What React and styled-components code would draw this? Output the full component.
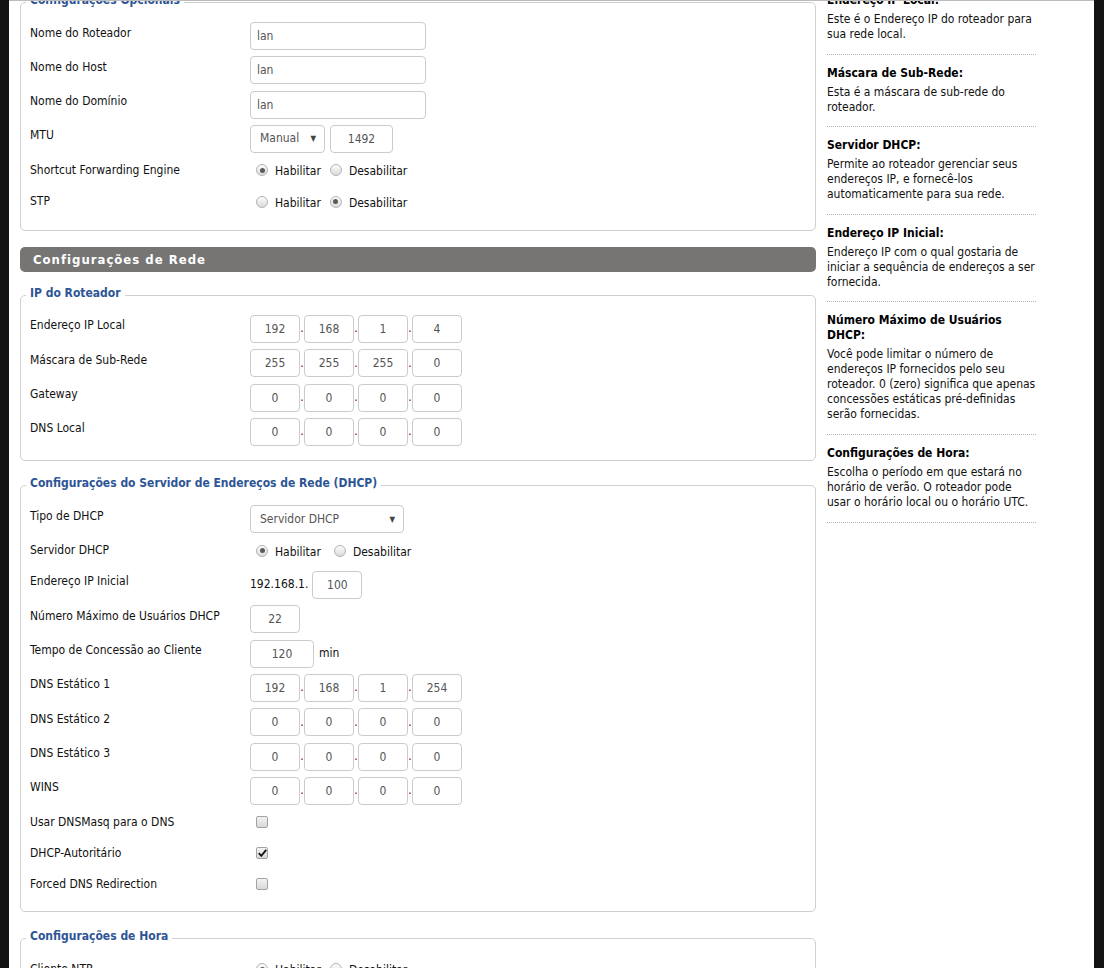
import React from 'react'
import styled, { createGlobalStyle } from 'styled-components'

const GlobalStyle = createGlobalStyle`
  html, body {
    margin: 0;
    padding: 0;
    background: #131313;
  }
  body {
    font-family: 'DejaVu Sans Condensed', 'Liberation Sans', sans-serif;
    font-size: 12px;
    color: #111;
  }
  * {
    box-sizing: border-box;
  }
`

const Page = styled.div`
  margin-left: 9px;
  width: 1085px;
  height: 968px;
  background: #fff;
  border-top: 1px solid #bcbcbc;
  overflow: hidden;
`

const Columns = styled.div`
  display: flex;
  align-items: flex-start;
  gap: 11px;
  padding-left: 11px;
  margin-top: -5px;
`

const Main = styled.div`
  width: 796px;
  flex: none;
  margin-top: -3px;
`

const Sidebar = styled.aside`
  width: 210px;
  flex: none;
  margin-top: -3px;
`

const Fieldset = styled.fieldset`
  margin: ${(p) => p.$mt || 0}px 0 0;
  padding: 7px 10px ${(p) => p.$pb || 10}px 5px;
  border: 1px solid #cfcfcf;
  border-radius: 5px;
  min-width: 0;
`

const Legend = styled.legend`
  padding: 0 4px 4px;
  font-weight: bold;
  color: #2d5596;
  line-height: 15px;
`

const SectionBar = styled.h2`
  margin: 16px 0 0;
  height: 25px;
  padding-left: 13px;
  background: #767574;
  border-radius: 5px;
  color: #fff;
  font-size: 13px;
  font-weight: bold;
  letter-spacing: 1px;
  line-height: 25px;
`

const Row = styled.div`
  display: grid;
  grid-template-columns: 220px 1fr;
  align-items: start;
  padding: 3px 0 3.33px 4px;
`

const Label = styled.div`
  padding-top: 3.5px;
  line-height: 15px;
  color: #111;
`

const Field = styled.div`
  display: flex;
  align-items: center;
  min-height: ${(p) => (p.$short ? 25 : 28)}px;
  line-height: 15px;
`

const TextInput = styled.input`
  width: ${(p) => p.$w}px;
  height: 28px;
  margin: 0;
  padding: 0 ${(p) => (p.$center ? 0 : 6)}px;
  border: 1px solid #cbcbcb;
  border-radius: 4px;
  background: #fff;
  font: inherit;
  color: #555;
  text-align: ${(p) => (p.$center ? 'center' : 'left')};
  outline: none;
`

const SelectBox = styled.div`
  width: ${(p) => p.$w}px;
  height: 28px;
  margin-right: ${(p) => p.$mr || 0}px;
  padding: 0 8px 0 9px;
  display: flex;
  align-items: center;
  justify-content: space-between;
  border: 1px solid #cbcbcb;
  border-radius: 4px;
  color: #555;
`

const Caret = styled.span`
  font-size: 8px;
  color: #444;
`

const Dot = styled.span`
  width: 4px;
  text-align: center;
  color: #7a0000;
`

const Plain = styled.span`
  margin: ${(p) => p.$m || '0'};
  color: #111;
`

const Choice = styled.label`
  display: inline-flex;
  align-items: center;
  margin-right: ${(p) => p.$mr || 0}px;
  color: #111;
`

const RadioDot = styled.span`
  position: relative;
  width: 12px;
  height: 12px;
  margin: 0 7px 3px 6px;
  border: 1px solid #b3b3b3;
  border-radius: 50%;
  background: linear-gradient(#fdfdfd, #dadada);

  &::after {
    content: '';
    display: ${(p) => (p.$checked ? 'block' : 'none')};
    position: absolute;
    left: 2.5px;
    top: 2.5px;
    width: 5px;
    height: 5px;
    border-radius: 50%;
    background: #5a5a5a;
  }
`

const CheckBox = styled.span`
  width: 12px;
  height: 12px;
  margin: 0 0 4px 6px;
  display: flex;
  align-items: center;
  justify-content: center;
  border: 1px solid #a3a3a3;
  border-radius: 2px;
  background: linear-gradient(#f2f2f2, #d9d9d9);
`

const HelpItem = styled.div`
  width: 209px;
  padding: 11px 0 11.6px;
  border-bottom: 1px dotted #b5b5b5;

  &:first-child {
    padding-top: 0;
  }
`

const HelpTitle = styled.div`
  margin-bottom: 4px;
  font-weight: bold;
  line-height: 15px;
  color: #000;
`

const HelpText = styled.div`
  line-height: 15px;
  color: #111;
`

const Ip = ({ values }) => (
  <Field>
    {values.map((v, i) => (
      <React.Fragment key={i}>
        {i > 0 && <Dot>.</Dot>}
        <TextInput $w={50} $center readOnly value={v} />
      </React.Fragment>
    ))}
  </Field>
)

const Radios = ({ on, gap = 3 }) => (
  <Field $short>
    <Choice $mr={gap}>
      <RadioDot $checked={on} />
      Habilitar
    </Choice>
    <Choice>
      <RadioDot $checked={!on} />
      Desabilitar
    </Choice>
  </Field>
)

const Check = ({ checked }) => (
  <Field $short>
    <CheckBox>
      {checked && (
        <svg width='9' height='8' viewBox='0 0 9 8'>
          <path d='M0.8 4.2 L3.3 6.8 L8.2 0.9' fill='none' stroke='#111' strokeWidth='1.8' />
        </svg>
      )}
    </CheckBox>
  </Field>
)

const help = [
  {
    title: 'Endereço IP Local:',
    text: 'Este é o Endereço IP do roteador para sua rede local.',
  },
  { title: 'Máscara de Sub-Rede:', text: 'Esta é a máscara de sub-rede do roteador.' },
  {
    title: 'Servidor DHCP:',
    text: 'Permite ao roteador gerenciar seus endereços IP, e fornecê-los automaticamente para sua rede.',
  },
  {
    title: 'Endereço IP Inicial:',
    text: 'Endereço IP com o qual gostaria de iniciar a sequência de endereços a ser fornecida.',
  },
  {
    title: 'Número Máximo de Usuários DHCP:',
    text: 'Você pode limitar o número de endereços IP fornecidos pelo seu roteador. 0 (zero) significa que apenas concessões estáticas pré-definidas serão fornecidas.',
  },
  {
    title: 'Configurações de Hora:',
    text: 'Escolha o período em que estará no horário de verão. O roteador pode usar o horário local ou o horário UTC.',
  },
]

const routerIp = [
  ['Endereço IP Local', ['192', '168', '1', '4']],
  ['Máscara de Sub-Rede', ['255', '255', '255', '0']],
  ['Gateway', ['0', '0', '0', '0']],
  ['DNS Local', ['0', '0', '0', '0']],
]

const dnsRows = [
  ['DNS Estático 1', ['192', '168', '1', '254']],
  ['DNS Estático 2', ['0', '0', '0', '0']],
  ['DNS Estático 3', ['0', '0', '0', '0']],
  ['WINS', ['0', '0', '0', '0']],
]

const App = () => {
  return (
    <>
      <GlobalStyle />
      <Page>
        <Columns>
          <Main>
            <Fieldset $pb={11}>
              <Legend>Configurações Opcionais</Legend>
              {['Nome do Roteador', 'Nome do Host', 'Nome do Domínio'].map((l) => (
                <Row key={l}>
                  <Label>{l}</Label>
                  <Field>
                    <TextInput $w={176} readOnly value='lan' />
                  </Field>
                </Row>
              ))}
              <Row>
                <Label>MTU</Label>
                <Field>
                  <SelectBox $w={75} $mr={5}>
                    Manual <Caret>▼</Caret>
                  </SelectBox>
                  <TextInput $w={63} $center readOnly value='1492' />
                </Field>
              </Row>
              <Row>
                <Label>Shortcut Forwarding Engine</Label>
                <Radios on />
              </Row>
              <Row>
                <Label>STP</Label>
                <Radios on={false} />
              </Row>
            </Fieldset>

            <SectionBar>Configurações de Rede</SectionBar>

            <Fieldset $mt={14} $pb={11}>
              <Legend>IP do Roteador</Legend>
              {routerIp.map(([l, v]) => (
                <Row key={l}>
                  <Label>{l}</Label>
                  <Ip values={v} />
                </Row>
              ))}
            </Fieldset>

            <Fieldset $mt={15} $pb={9}>
              <Legend>Configurações do Servidor de Endereços de Rede (DHCP)</Legend>
              <Row>
                <Label>Tipo de DHCP</Label>
                <Field>
                  <SelectBox $w={154}>
                    Servidor DHCP <Caret>▼</Caret>
                  </SelectBox>
                </Field>
              </Row>
              <Row>
                <Label>Servidor DHCP</Label>
                <Radios on gap={7} />
              </Row>
              <Row>
                <Label>Endereço IP Inicial</Label>
                <Field>
                  <Plain $m='0 4px 0 0'>192.168.1.</Plain>
                  <TextInput $w={50} $center readOnly value='100' />
                </Field>
              </Row>
              <Row>
                <Label>Número Máximo de Usuários DHCP</Label>
                <Field>
                  <TextInput $w={50} $center readOnly value='22' />
                </Field>
              </Row>
              <Row>
                <Label>Tempo de Concessão ao Cliente</Label>
                <Field>
                  <TextInput $w={64} $center readOnly value='120' />
                  <Plain $m='0 0 0 5px'>min</Plain>
                </Field>
              </Row>
              {dnsRows.map(([l, v]) => (
                <Row key={l}>
                  <Label>{l}</Label>
                  <Ip values={v} />
                </Row>
              ))}
              <Row>
                <Label>Usar DNSMasq para o DNS</Label>
                <Check />
              </Row>
              <Row>
                <Label>DHCP-Autoritário</Label>
                <Check checked />
              </Row>
              <Row>
                <Label>Forced DNS Redirection</Label>
                <Check />
              </Row>
            </Fieldset>

            <Fieldset $mt={17}>
              <Legend>Configurações de Hora</Legend>
              <Row>
                <Label>Cliente NTP</Label>
                <Radios on />
              </Row>
              <Row>
                <Label>Fuso Horário</Label>
                <Field>
                  <SelectBox $w={300}>
                    UTC-03:00 <Caret>▼</Caret>
                  </SelectBox>
                </Field>
              </Row>
            </Fieldset>
          </Main>

          <Sidebar>
            {help.map((h) => (
              <HelpItem key={h.title}>
                <HelpTitle>{h.title}</HelpTitle>
                <HelpText>{h.text}</HelpText>
              </HelpItem>
            ))}
          </Sidebar>
        </Columns>
      </Page>
    </>
  )
}

export default App
